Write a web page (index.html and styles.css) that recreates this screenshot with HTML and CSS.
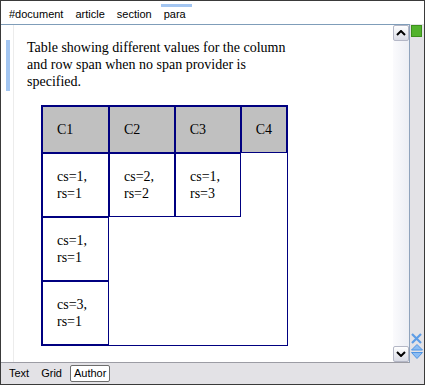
FILE: index.html
```html
<!DOCTYPE html>
<html lang="en">
<head>
    <meta charset="UTF-8">
    <title>Author view</title>
    <link rel="stylesheet" href="styles.css">
</head>
<body>

    <div class="window">
        <div class="crumbs">
            <span class="crumb">#document</span>
            <span class="crumb">article</span>
            <span class="crumb">section</span>
            <span class="crumb active">para</span>
        </div>

        <div class="main">
            <div class="editor-box">
                <div class="editor">
                    <div class="gutter"><div class="marker"></div></div>
                    <div class="content">
                        <p class="para">Table showing different values for the column and row span when no span provider is specified.</p>
                        <div class="grid">
                            <div class="row">
                                <div class="cell head">C1</div>
                                <div class="cell head">C2</div>
                                <div class="cell head">C3</div>
                                <div class="cell head">C4</div>
                            </div>
                            <div class="row">
                                <div class="cell">cs=1,<br>rs=1</div>
                                <div class="cell">cs=2,<br>rs=2</div>
                                <div class="cell">cs=1,<br>rs=3</div>
                            </div>
                            <div class="row">
                                <div class="cell">cs=1,<br>rs=1</div>
                            </div>
                            <div class="row">
                                <div class="cell">cs=3,<br>rs=1</div>
                            </div>
                        </div>
                    </div>
                </div>
                <div class="scrollbar">
                    <div class="scroll-btn">
                        <svg width="10" height="6" viewBox="0 0 10 6"><path d="M1 5 L5 1 L9 5" fill="none" stroke="#000" stroke-width="2"/></svg>
                    </div>
                    <div class="scroll-btn">
                        <svg width="10" height="6" viewBox="0 0 10 6"><path d="M1 1 L5 5 L9 1" fill="none" stroke="#000" stroke-width="2"/></svg>
                    </div>
                </div>
            </div>
            <div class="side">
                <div class="status"></div>
                <svg class="close" width="11" height="11" viewBox="0 0 11 11"><path d="M1 1 L10 10 M10 1 L1 10" stroke="#5d9de6" stroke-width="2.2"/></svg>
                <svg class="arrows" width="12" height="15" viewBox="0 0 12 15"><path d="M6 0.5 L11.5 6 L0.5 6 Z" fill="#8cbcf2" stroke="#4f94e3"/><path d="M0.5 8.5 L11.5 8.5 L6 14.5 Z" fill="#8cbcf2" stroke="#4f94e3"/></svg>
            </div>
        </div>

        <div class="tabs">
            <span class="tab">Text</span>
            <span class="tab">Grid</span>
            <span class="tab selected">Author</span>
        </div>
    </div>

</body>
</html>
```

FILE: styles.css
```css
body {
    margin: 0;
    font-family: "Liberation Sans", Arial, sans-serif;
    font-size: 11px;
    color: #000;
}
.window {
    width: 425px;
    height: 385px;
    box-sizing: border-box;
    border: 1px solid #3a3a3a;
    background: #e3e2e6;
    display: flex;
    flex-direction: column;
}
.crumbs {
    flex: none;
    height: 23px;
    box-sizing: border-box;
    padding: 7px 2px 0;
    background: #fff;
    display: flex;
    line-height: 13px;
}
.crumb {
    position: relative;
    padding: 0 6px;
}
.crumb.active::before {
    content: "";
    position: absolute;
    top: -4px;
    left: 3px;
    right: 0;
    height: 3px;
    background: #a3c6f2;
}
.main {
    flex: 1;
    display: flex;
    min-height: 0;
}
.editor-box {
    width: 409px;
    box-sizing: border-box;
    display: flex;
    border-top: 1px solid #7f9db9;
    border-bottom: 1px solid #9c9ca4;
    border-right: 1px solid #8fa3bc;
}
.editor {
    flex: 1;
    display: flex;
    background: #fff;
}
.gutter {
    width: 12px;
    border-right: 1px solid #ececec;
}
.marker {
    margin: 15px 0 0 5px;
    width: 4px;
    height: 51px;
    background: #a3c6f2;
}
.content {
    padding: 14px 0 0 13px;
}
.para {
    margin: 0;
    width: 270px;
    font-family: "Liberation Serif", "Times New Roman", serif;
    font-size: 14px;
    line-height: 17px;
}
.grid {
    margin: 15px 0 0 14px;
    width: 247px;
    box-sizing: border-box;
    border: 1px solid #000080;
    display: flex;
    flex-direction: column;
    font-family: "Liberation Serif", "Times New Roman", serif;
    font-size: 14px;
    line-height: 17px;
}
.row {
    display: flex;
}
.cell {
    box-sizing: border-box;
    border: 1px solid #000080;
    padding: 14px;
    width: 66px;
}
.cell:nth-child(1) {
    width: 67px;
}
.cell:nth-child(4) {
    width: auto;
    flex: 1;
}
.cell.head {
    background: #c0c0c0;
}
.scrollbar {
    width: 16px;
    display: flex;
    flex-direction: column;
    justify-content: space-between;
    background: linear-gradient(to right, #fbfbfd, #eceef4);
}
.scroll-btn {
    height: 16px;
    box-sizing: border-box;
    border: 1px solid #b4b7c6;
    border-radius: 2px;
    background: linear-gradient(#ffffff, #d9dbe5);
    display: flex;
    align-items: center;
    justify-content: center;
}
.side {
    width: 14px;
    display: flex;
    flex-direction: column;
    align-items: flex-start;
}
.status {
    margin: 1px 0 0 1px;
    width: 11px;
    height: 12px;
    box-sizing: border-box;
    background: #52b22c;
    border: 1px solid #3c8f1c;
}
.close {
    margin: auto 0 0 1px;
}
.arrows {
    margin: 0 0 4px 1px;
}
.tabs {
    flex: none;
    height: 21px;
    display: flex;
    align-items: center;
    padding-left: 4px;
    gap: 4px;
}
.tab {
    padding: 1px 3px;
    border: 1px solid transparent;
    line-height: 13px;
    font-size: 11px;
}
.tab.selected {
    background: #fff;
    border-color: #6d6d6d;
    border-radius: 2px;
}
```
